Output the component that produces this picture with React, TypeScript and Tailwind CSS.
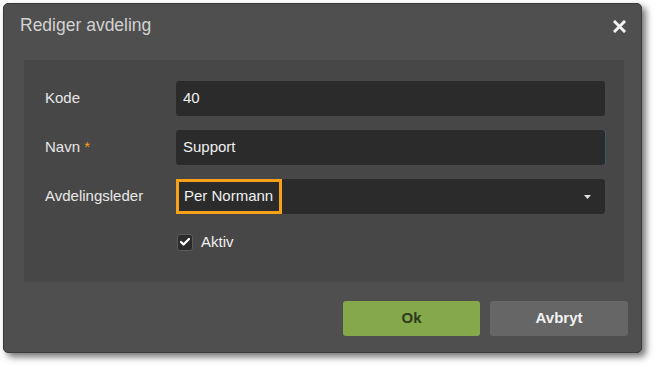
import { Check } from "lucide-react";

const FONT = { fontFamily: '"Liberation Sans", Arial, sans-serif' };

function Field({ label, required, children }: { label: string; required?: boolean; children: React.ReactNode }) {
  return (
    <div className="flex h-[35px] items-center">
      <div className="w-[131px] text-[15px] text-[#e8e8e8]">
        {label}
        {required && <span className="text-[#f39c12]"> *</span>}
      </div>
      <div className="h-full flex-1">{children}</div>
    </div>
  );
}

export default function App() {
  return (
    <div className="h-[367px] w-[658px] bg-white pl-[3px] pt-[3px]" style={FONT}>
      <div className="flex h-[350px] w-[639px] flex-col rounded-[5px] border border-[#3a3a3a] bg-[#4f4f4f] shadow-[4px_4px_7px_rgba(0,0,0,0.55)]">
        {/* header */}
        <div className="flex h-[56px] items-start justify-between pl-[16px] pr-[15px] pt-[9px]">
          <h1 className="text-[17.5px] leading-[24px] text-[#d2d2d2]">Rediger avdeling</h1>
          <svg className="mt-[7px]" width="13" height="13" viewBox="0 0 13 13">
            <path d="M2 2 L11 11 M11 2 L2 11" stroke="#f2f2f2" strokeWidth="3" strokeLinecap="square" />
          </svg>
        </div>

        {/* body */}
        <div className="ml-[20px] mr-[17px] flex h-[222px] flex-col gap-[14px] bg-[#474747] pl-[21px] pr-[19px] pt-[21px]">
          <Field label="Kode">
            <div className="flex h-full items-center rounded-[3px] bg-[#2b2b2b] pl-[7px] text-[15px] text-[#f0f0f0]">40</div>
          </Field>
          <Field label="Navn" required>
            <div className="flex h-full items-center rounded-[3px] bg-[#2b2b2b] pl-[7px] text-[15px] text-[#f0f0f0] shadow-[1px_0_0_#2f5d6a]">
              Support
            </div>
          </Field>
          <Field label="Avdelingsleder">
            <div className="flex h-full items-center justify-between rounded-[3px] bg-[#2b2b2b] pr-[14px] text-[15px] text-[#f0f0f0]">
              <span className="flex h-full items-center border-[3px] border-[#f7a01a] pl-[5px] pr-[6px]">Per Normann</span>
              <svg width="7" height="4" viewBox="0 0 7 4">
                <path d="M0 0 H7 L3.5 4 Z" fill="#e0e0e0" />
              </svg>
            </div>
          </Field>
          <div className="mt-[4px] flex h-[20px] items-center pl-[132px]">
            <span className="flex h-[17px] w-[16px] items-center justify-center rounded-[3px] border border-[#5a5a5a] bg-[#2b2b2b]">
              <Check size={12} strokeWidth={4.5} color="#ffffff" />
            </span>
            <span className="ml-[8px] text-[15px] text-[#f0f0f0]">Aktiv</span>
          </div>
        </div>

        {/* footer */}
        <div className="flex justify-end gap-[10px] pr-[13px] pt-[19px]">
          <button className="h-[35px] w-[137px] rounded-[3px] bg-[#84a84a] text-[15px] font-bold text-[#2c3a1e]">Ok</button>
          <button className="h-[35px] w-[138px] rounded-[3px] bg-[#666666] text-[15px] font-bold text-[#f2f2f2]">Avbryt</button>
        </div>
      </div>
    </div>
  );
}
